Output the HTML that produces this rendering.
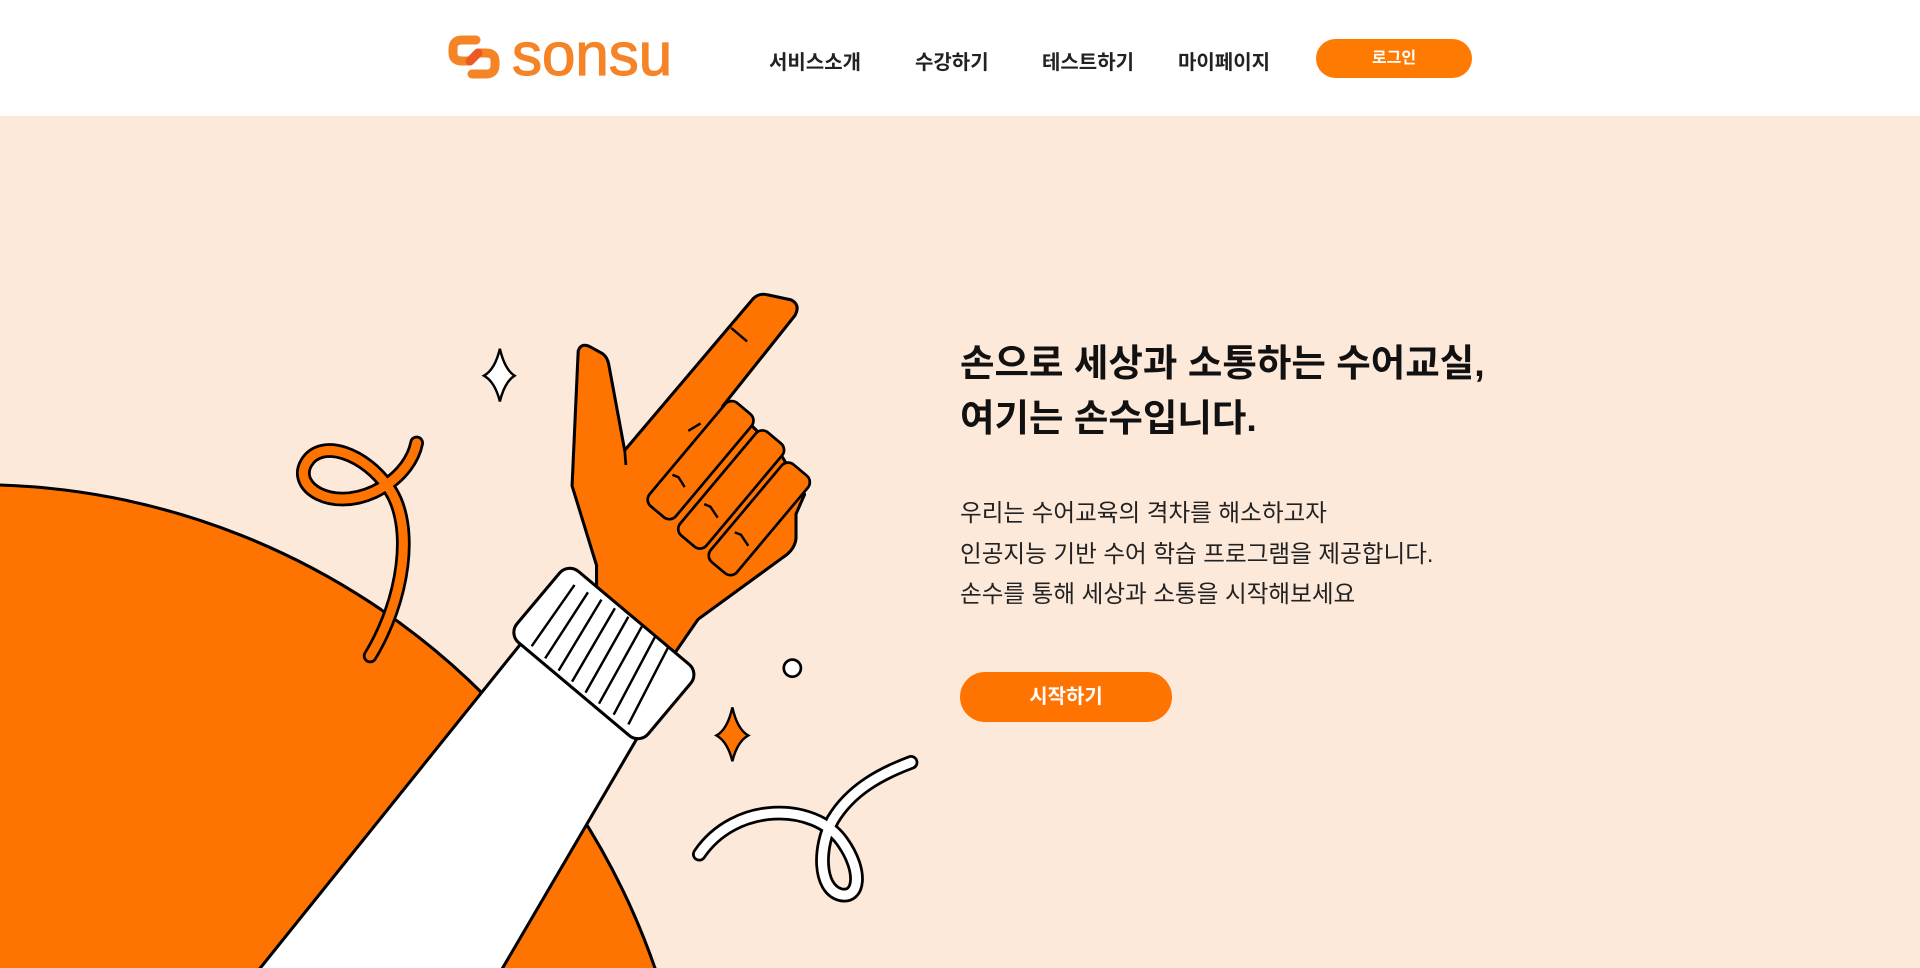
<!DOCTYPE html>
<html><head><meta charset="utf-8">
<style>
*{margin:0;padding:0;box-sizing:border-box}
html,body{width:1920px;height:968px;overflow:hidden}
body{background:#fde9da;font-family:"Liberation Sans","Noto Sans CJK KR",sans-serif;position:relative}
header{position:absolute;left:0;top:0;width:1920px;height:116px;background:#fff}
.logo{position:absolute;left:512px;top:20px;font-size:60px;color:#f58426;line-height:70px;-webkit-text-stroke:1.2px #f58426}
.nav{position:absolute;top:49px;font-size:20px;color:#222;font-weight:700;line-height:28px}
.login{position:absolute;left:1316px;top:39px;width:156px;height:39px;border-radius:20px;background:#ff7a00;color:#fff;font-weight:700;font-size:16px;text-align:center;line-height:39px}
svg.ill{position:absolute;left:0;top:0;display:block}
h1{position:absolute;left:960px;top:336px;font-size:37.5px;line-height:55px;font-weight:700;color:#111}
p{position:absolute;left:960px;top:494px;font-size:23.6px;line-height:40.5px;color:#222}
.start{position:absolute;left:960px;top:672px;width:212px;height:50px;border-radius:25px;background:#ff7300;color:#fff;font-weight:700;font-size:20px;text-align:center;line-height:50px}
</style></head><body>
<svg class="ill" width="1920" height="968" viewBox="0 0 1568 791">
<circle cx="-20" cy="983" r="587" fill="#ff7300" stroke="#000" stroke-width="2.5"/>
<path d="M205,800 L430,520 L525,595 L405,800 Z" fill="#fff" stroke="#000" stroke-width="2.5" stroke-linejoin="round"/>
<path d="M487,462 L467,397 L472,287 Q474,280 481,283 L492,289 Q496,292 497,298 L510,368 L615,244 Q620,239 627,241 L646,245 Q654,249 649,258 L590,332 L614,348 L638,372 L657,404 L650,420 L650,440 Q649,449 640,455 L570,506 L550,535 L487,480 Z" fill="#ff7300" stroke="#000" stroke-width="2.5" stroke-linejoin="round"/>
<path d="M510,368 L511,380" stroke="#000" stroke-width="2.2"/>
<g fill="#ff7300" stroke="#000" stroke-width="2.2" stroke-linejoin="round">
<rect x="-14" y="-55" width="28" height="110" rx="7" transform="translate(572,376) rotate(40)"/>
<rect x="-14" y="-55" width="28" height="110" rx="7" transform="translate(597,400) rotate(40)"/>
<rect x="-14" y="-52" width="28" height="104" rx="7" transform="translate(620,424) rotate(40)"/>
</g>
<g stroke="#000" stroke-width="2" fill="none">
<path d="M597,268 L610,279"/><path d="M562,352 L572,346"/>
<path d="M549,388 L554,390 L559,398"/><path d="M575,412 L580,414 L586,423"/><path d="M600,435 L605,437 L611,446"/>
</g>
<g transform="translate(493,534) rotate(40)">
<rect x="-70" y="-38" width="140" height="76" rx="11" fill="#fff" stroke="#000" stroke-width="2.5"/>
</g>
<g stroke="#000" stroke-width="2">
<path d="M469,478 L434,528 M480,484 L445,538 M491,490 L456,548 M502,497 L467,557 M513,504 L478,566 M524,512 L489,575 M535,520 L501,584 M546,528 L513,592"/>
</g>
<path d="M408,285 Q412,302 420,307 Q412,312 408,328 Q404,312 395,307 Q404,302 408,285 Z" fill="#fff" stroke="#000" stroke-width="2"/>
<path d="M598,578 Q602,596 611,601 Q602,606 598,622 Q594,606 585,601 Q594,596 598,578 Z" fill="#ff7300" stroke="#000" stroke-width="2"/>
<circle cx="647" cy="546" r="7" fill="#fff" stroke="#000" stroke-width="2.2"/>
<g fill="none" stroke-linecap="round">
<path d="M302,536 C330,490 338,430 318,400 C298,370 262,358 250,378 C238,398 270,418 305,402 C330,390 338,372 340,362" stroke="#000" stroke-width="12"/>
<path d="M302,536 C330,490 338,430 318,400 C298,370 262,358 250,378 C238,398 270,418 305,402 C330,390 338,372 340,362" stroke="#ff7300" stroke-width="7.5"/>
<path d="M571,698 C600,655 665,655 688,688 C705,712 702,735 686,731 C668,726 668,692 680,670 C695,645 720,632 744,623" stroke="#000" stroke-width="12"/>
<path d="M571,698 C600,655 665,655 688,688 C705,712 702,735 686,731 C668,726 668,692 680,670 C695,645 720,632 744,623" stroke="#fff" stroke-width="7.5"/>
</g>
</svg>
<header>
<svg style="position:absolute;left:448px;top:34px" width="52" height="46" viewBox="0 0 52 46">
<path d="M28,6 L14,6 Q5,6 5,15 L5,19 Q5,27 14,27 L22,27" fill="none" stroke="#f58426" stroke-width="9" stroke-linecap="round"/>
<path d="M24,40 L38,40 Q47,40 47,31 L47,27 Q47,19 38,19 L30,19" fill="none" stroke="#f58426" stroke-width="9" stroke-linecap="round"/>
<path d="M22,27 L30,19" stroke="#ec5a24" stroke-width="9" stroke-linecap="round"/>
</svg>
<div class="logo">sonsu</div>
<div class="nav" style="left:769px">서비스소개</div>
<div class="nav" style="left:915px">수강하기</div>
<div class="nav" style="left:1042px">테스트하기</div>
<div class="nav" style="left:1178px">마이페이지</div>
<div class="login">로그인</div>
</header>
<h1>손으로 세상과 소통하는 수어교실,<br>여기는 손수입니다.</h1>
<p>우리는 수어교육의 격차를 해소하고자<br>인공지능 기반 수어 학습 프로그램을 제공합니다.<br>손수를 통해 세상과 소통을 시작해보세요</p>
<div class="start">시작하기</div>
</body></html>
